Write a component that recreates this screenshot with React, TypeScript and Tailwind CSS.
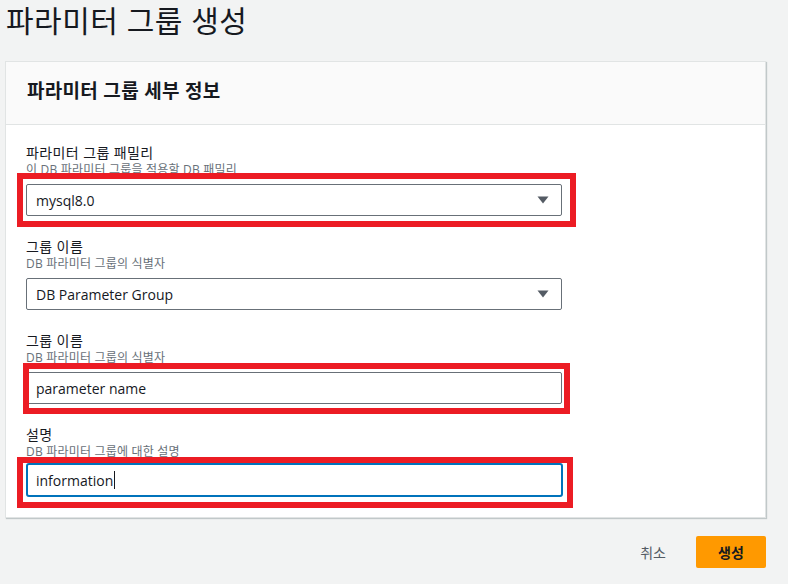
import type { ReactNode } from 'react';

const FONT = "font-['Open_Sans','Noto_Sans_CJK_KR',sans-serif]";

function Field({ label, desc, tight, children }: { label: string; desc: string; tight?: boolean; children: ReactNode }) {
  return (
    <div className="flex flex-col">
      <label className="text-[14px] leading-[18px] tracking-[0.4px] text-[#16191f]">{label}</label>
      <p className="text-[12px] leading-[16px] tracking-[0.2px] text-[#687078]">{desc}</p>
      <div className={tight ? 'mt-[3px]' : 'mt-[6px]'}>{children}</div>
    </div>
  );
}

function SelectBox({ value }: { value: string }) {
  return (
    <div className="flex h-[32px] w-[536px] items-center justify-between rounded-[2px] border border-[#687078] bg-white pl-[9px] pr-[12px]">
      <span className="text-[14px] text-[#16191f]">{value}</span>
      <svg width="12" height="8" viewBox="0 0 12 8">
        <path d="M0.5 0.5 H11.5 L6 7.5 Z" fill="#545b64" />
      </svg>
    </div>
  );
}

export default function App() {
  return (
    <div className={`relative h-[584px] w-[788px] overflow-hidden bg-[#f2f3f3] ${FONT}`}>
      <h1 className="pl-[6px] pt-[1px] text-[30px] leading-[40px] tracking-[0.5px] text-[#16191f]">파라미터 그룹 생성</h1>

      <div className="ml-[5px] mt-[20px] w-[761px] border border-[#e1e4e4] bg-white shadow-[1px_1px_1px_rgba(0,28,36,0.2)]">
        <div className="flex h-[63px] items-center border-b border-[#e1e4e4] bg-[#fafafa] px-[21px] pb-[3px]">
          <h2 className="text-[19px] font-bold tracking-[0.3px] text-[#16191f]">파라미터 그룹 세부 정보</h2>
        </div>
        <div className="flex flex-col gap-[22px] px-[20px] pb-[20px] pt-[19px]">
          <Field label="파라미터 그룹 패밀리" desc="이 DB 파라미터 그룹을 적용할 DB 패밀리">
            <SelectBox value="mysql8.0" />
          </Field>
          <Field label="그룹 이름" desc="DB 파라미터 그룹의 식별자">
            <SelectBox value="DB Parameter Group" />
          </Field>
          <Field label="그룹 이름" desc="DB 파라미터 그룹의 식별자">
            <div className="flex h-[32px] w-[536px] items-center rounded-[2px] border border-[#687078] bg-white pl-[9px]">
              <span className="text-[14px] text-[#16191f]">parameter name</span>
            </div>
          </Field>
          <Field label="설명" desc="DB 파라미터 그룹에 대한 설명" tight>
            <div className="flex h-[34px] w-[537px] items-center rounded-[3px] border-2 border-[#0073bb] bg-white pl-[8px]">
              <span className="text-[14px] text-[#16191f]">information</span>
              <span className="ml-[1px] h-[18px] w-px bg-[#16191f]" />
            </div>
          </Field>
        </div>
      </div>

      <div className="mt-[18px] flex items-center justify-end gap-[30px] pr-[22px]">
        <button className="text-[14px] text-[#545b64]">취소</button>
        <button className="h-[32px] w-[70px] rounded-[2px] bg-[#ff9900] text-[14px] font-bold text-[#16191f]">생성</button>
      </div>

      {/* red annotation boxes */}
      <div className="pointer-events-none absolute left-[17px] top-[173px] h-[54px] w-[559px] border-[6px] border-[#ec1c24]" />
      <div className="pointer-events-none absolute left-[23px] top-[363px] h-[51px] w-[547px] border-[6px] border-[#ec1c24]" />
      <div className="pointer-events-none absolute left-[17px] top-[457px] h-[51px] w-[556px] border-[6px] border-[#ec1c24]" />
    </div>
  );
}
